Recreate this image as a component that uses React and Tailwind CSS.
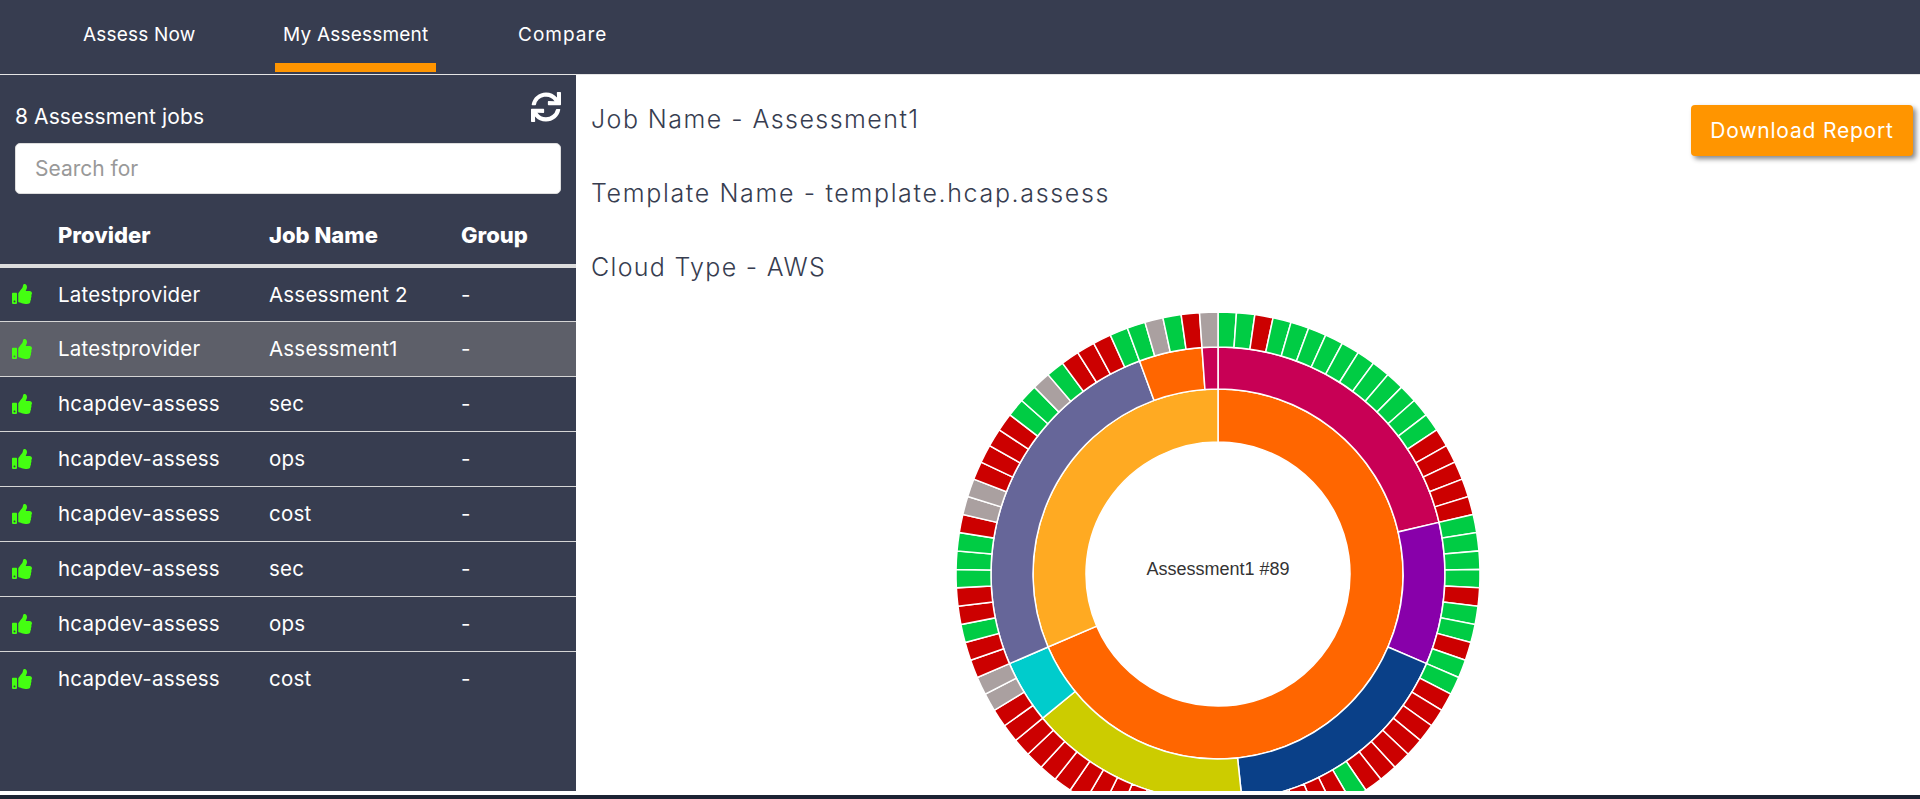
import React from "react";
import { FaSync, FaThumbsUp } from "react-icons/fa";

const CX = 265;
const CY = 265;
const STEP = 360 / 89;

const innerRing = [
    { from: 0, to: 61, color: "#ff6600" },
    { from: 61, to: 89, color: "#ffaa22" },
];

const middleRing = [
    { from: 0, to: 19, color: "#c80055" },
    { from: 19, to: 28, color: "#8800aa" },
    { from: 28, to: 43, color: "#0a4088" },
    { from: 43, to: 57, color: "#cccc00" },
    { from: 57, to: 61, color: "#00cccc" },
    { from: 61, to: 84, color: "#666699" },
    { from: 84, to: 88, color: "#ff6600" },
    { from: 88, to: 89, color: "#c80055" },
];

// status of each job, clockwise from the top: [status, how many in a row]
const outerRuns = [
    ["g", 2], ["r", 1], ["g", 11], ["r", 5], ["g", 4], ["r", 1], ["g", 2], ["r", 1], ["g", 2],
    ["r", 7], ["g", 1], ["r", 22], ["n", 2], ["r", 2], ["g", 1], ["r", 2], ["g", 3], ["r", 1],
    ["n", 2], ["r", 4], ["g", 2], ["n", 1], ["g", 1], ["r", 3], ["g", 2], ["n", 1], ["g", 1],
    ["r", 1], ["n", 1],
];

const statusColors = { g: "#00cc44", r: "#cc0000", n: "#aaa0a0" };

const outerRing = [];
outerRuns.forEach(([status, count]) => {
    for (let i = 0; i < count; i++) {
        const from = outerRing.length;
        outerRing.push({ from, to: from + 1, color: statusColors[status] });
    }
});

const point = (r, step) => {
    const a = (step * STEP * Math.PI) / 180;
    return `${CX + r * Math.sin(a)} ${CY - r * Math.cos(a)}`;
};

const arc = (r0, r1, from, to) => {
    const large = (to - from) * STEP > 180 ? 1 : 0;
    return `M${point(r1, from)}A${r1} ${r1} 0 ${large} 1 ${point(r1, to)}L${point(r0, to)}A${r0} ${r0} 0 ${large} 0 ${point(r0, from)}Z`;
};

const Ring = ({ items, r0, r1 }) =>
    items.map((item) => (
        <path
            key={item.from}
            d={arc(r0, r1, item.from, item.to)}
            fill={item.color}
            stroke="#ffffff"
            strokeWidth="1.5"
        />
    ));

const jobs = [
    { provider: "Latestprovider", name: "Assessment 2" },
    { provider: "Latestprovider", name: "Assessment1", active: true },
    { provider: "hcapdev-assess", name: "sec" },
    { provider: "hcapdev-assess", name: "ops" },
    { provider: "hcapdev-assess", name: "cost" },
    { provider: "hcapdev-assess", name: "sec" },
    { provider: "hcapdev-assess", name: "ops" },
    { provider: "hcapdev-assess", name: "cost" },
];

const App = () => {
    return (
        <div className="w-[1920px] h-[799px] overflow-hidden bg-white font-['Inter',sans-serif]">
            <nav className="h-[75px] bg-[#373d50] border-b border-[#e5e5e5] flex text-white text-[19px] tracking-[0.2px]">
                <a className="ml-[83px] w-[110px] pt-[21px] whitespace-nowrap">Assess Now</a>
                <a className="ml-[82px] w-[161px] h-[72px] pt-[21px] px-2 whitespace-nowrap border-b-[9px] border-[#ff9500]">My Assessment</a>
                <a className="ml-[82px] pt-[21px] tracking-[1px]">Compare</a>
            </nav>

            <div className="flex h-[716px]">
                <aside className="w-[576px] shrink-0 bg-[#373d50] text-white">
                    <div className="px-[15px] pt-[17px] flex justify-between items-start h-[68px]">
                        <span className="text-[21px] mt-[9px] tracking-[0.1px]">8 Assessment jobs</span>
                        <FaSync className="w-[30px] h-[30px]" />
                    </div>
                    <input
                        placeholder="Search for"
                        className="block ml-[15px] w-[546px] h-[51px] rounded-[5px] bg-white border border-[#ddd] px-[19px] text-[21px] text-[#333] placeholder:text-[#999]"
                    />
                    <table className="mt-[12px] w-full table-fixed text-left text-[20.5px] tracking-[0.2px]">
                        <thead className="border-b-4 border-[#dddddd]">
                            <tr className="h-[60px]">
                                <th className="w-[58px]"></th>
                                <th className="w-[211px] text-[22px] font-extrabold tracking-normal">Provider</th>
                                <th className="w-[192px] text-[22px] font-extrabold tracking-normal">Job Name</th>
                                <th className="text-[22px] font-extrabold tracking-normal">Group</th>
                            </tr>
                        </thead>
                        <tbody>
                            {jobs.map((job, idx) => (
                                <tr
                                    key={idx}
                                    className={`h-[55px] ${idx < jobs.length - 1 ? "border-b border-[#d5d5d5]" : ""} ${job.active ? "bg-[#5d5f69]" : ""}`}
                                >
                                    <td className="pl-[12px]">
                                        <FaThumbsUp className="w-[20px] h-[20px] text-[#44ff11]" />
                                    </td>
                                    <td className="pt-[2px]">{job.provider}</td>
                                    <td className="pt-[2px]">{job.name}</td>
                                    <td className="pt-[2px]">-</td>
                                </tr>
                            ))}
                        </tbody>
                    </table>
                </aside>

                <main className="flex-1 min-w-0 overflow-hidden text-[#373d50]">
                    <div className="flex justify-between items-start pl-[15px] pr-[7px] pt-[26px]">
                        <div className="text-[25px] leading-[36px] tracking-[1.3px] font-light">
                            <p className="mb-[38px] tracking-[1.45px]">Job Name - Assessment1</p>
                            <p className="mb-[38px] tracking-[1.65px]">Template Name - template.hcap.assess</p>
                            <p>Cloud Type - AWS</p>
                        </div>
                        <button className="mt-[4px] w-[222px] h-[51px] rounded-[4px] bg-[#ff9500] text-white text-[21px] tracking-[0.8px] shadow-[3px_3px_5px_#888888]">
                            Download Report
                        </button>
                    </div>
                    <svg width="530" height="530" viewBox="0 0 530 530" className="block mt-[24px] ml-[377px]">
                        <Ring items={innerRing} r0={132} r1={185} />
                        <Ring items={middleRing} r0={185} r1={227} />
                        <Ring items={outerRing} r0={227} r1={262} />
                        <text
                            x={CX}
                            y={266}
                            textAnchor="middle"
                            fontFamily="'Liberation Sans', sans-serif"
                            fontSize="18"
                            fill="#333333"
                        >
                            Assessment1 #89
                        </text>
                    </svg>
                </main>
            </div>

            <div className="h-[4px] bg-white"></div>
            <div className="h-[4px] bg-[#1c2333]"></div>
        </div>
    );
};

export default App;
